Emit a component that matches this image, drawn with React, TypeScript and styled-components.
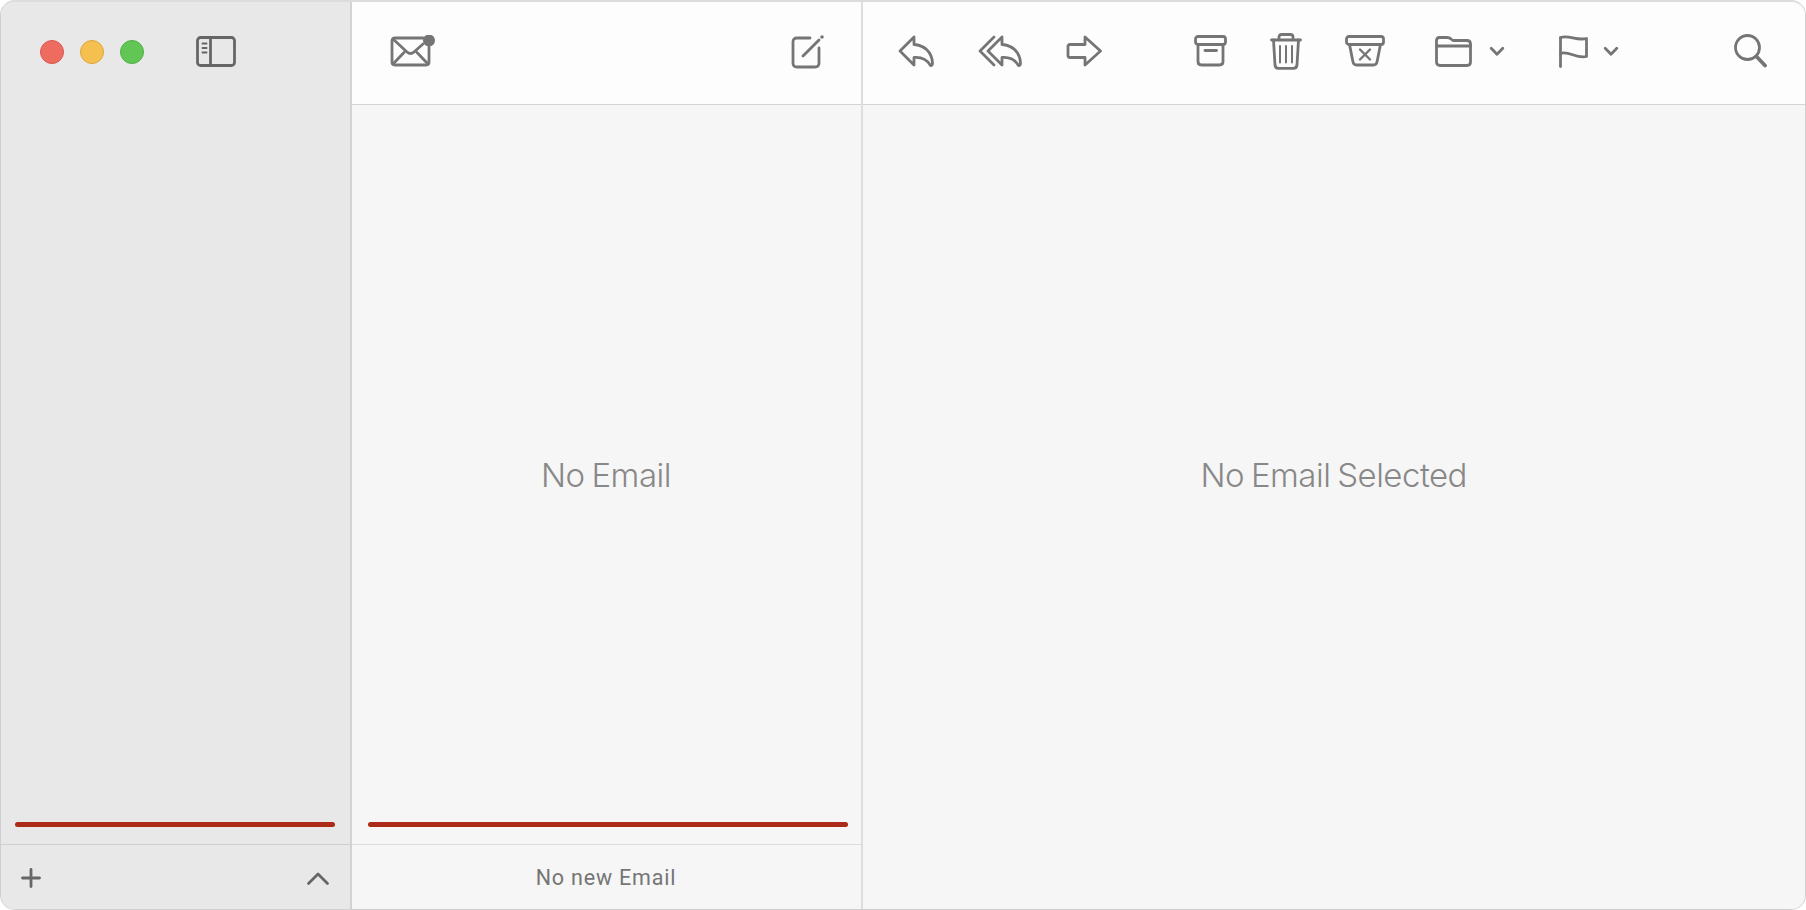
import styled, { createGlobalStyle } from "styled-components";

const GlobalStyle = createGlobalStyle`
  html, body {
    margin: 0;
    padding: 0;
    height: 100%;
    background: #fff;
  }
  #root {
    height: 100%;
  }
`;

const MailWindow = styled.div`
  box-sizing: border-box;
  width: 1806px;
  height: 910px;
  display: grid;
  grid-template-columns: 350.5px 511px 1fr;
  border: 1.5px solid #cfcfcf;
  border-top: 2px solid #dcdcdc;
  border-radius: 15px;
  overflow: hidden;
  background: #f6f6f6;
`;

const Column = styled.section<{ $bg: string; $line?: string }>`
  display: flex;
  flex-direction: column;
  min-width: 0;
  background: ${(p) => p.$bg};
  border-right: ${(p) => (p.$line ? `2px solid ${p.$line}` : "none")};
`;

const Toolbar = styled.header<{ $bg?: string; $line?: string }>`
  box-sizing: border-box;
  height: 102.5px;
  flex: none;
  display: flex;
  align-items: center;
  padding-bottom: 3.5px;
  color: #757575;
  background: ${(p) => p.$bg || "#fdfdfd"};
  border-bottom: ${(p) => (p.$line ? `1.5px solid ${p.$line}` : "none")};
`;

const SidebarBar = styled(Toolbar)`
  padding-left: 39px;
  color: #666;
`;

const ListBar = styled(Toolbar)`
  justify-content: space-between;
  padding-left: 38px;
  padding-right: 36px;
`;

const MainBar = styled(Toolbar)`
  padding-left: 35px;
  padding-right: 38px;
`;

const Lights = styled.div`
  display: flex;
  gap: 16px;
  margin-right: 52px;
`;

const Light = styled.span<{ $color: string; $edge: string }>`
  box-sizing: border-box;
  width: 24px;
  height: 24px;
  border-radius: 50%;
  background: ${(p) => p.$color};
  border: 1px solid ${(p) => p.$edge};
`;

const ToolGroup = styled.div<{ $gap: number; $offset?: number }>`
  display: flex;
  align-items: center;
  gap: ${(p) => p.$gap}px;
  margin-left: ${(p) => p.$offset || 0}px;
`;

const SearchSlot = styled.div`
  display: flex;
  margin-left: auto;
`;

const Icon = styled.svg`
  display: block;
  flex: none;
  fill: none;
  stroke: currentColor;
  stroke-width: 2.8;
  stroke-linecap: round;
  stroke-linejoin: round;
`;

const Body = styled.div`
  flex: 1;
  display: flex;
  flex-direction: column;
  min-height: 0;
`;

const Empty = styled.div`
  flex: 1;
  display: flex;
  align-items: center;
  justify-content: center;
  font-family: Inter, "Liberation Sans", sans-serif;
  font-size: 33px;
  font-weight: 300;
  letter-spacing: -0.5px;
  word-spacing: -2px;
  color: #888888;
`;

const ListEmpty = styled(Empty)`
  padding-top: 24px;
`;

const MainEmpty = styled(Empty)`
  padding-bottom: 64px;
`;

const ProgressBar = styled.div<{ $inset: string }>`
  height: 5px;
  flex: none;
  margin: ${(p) => p.$inset};
  border-radius: 3px;
  background: #ab2a18;
`;

const Footer = styled.footer<{ $line: string }>`
  box-sizing: border-box;
  height: 65px;
  flex: none;
  display: flex;
  align-items: center;
  border-top: 1.5px solid ${(p) => p.$line};
`;

const SidebarFooter = styled(Footer)`
  justify-content: space-between;
  padding: 2px 20px 0 19px;
  color: #666;
`;

const ListFooter = styled(Footer)`
  justify-content: center;
  padding-top: 1px;
  font-family: Roboto, "Liberation Sans", sans-serif;
  font-size: 21.5px;
  letter-spacing: 0.8px;
  color: #757575;
`;

const SidebarToggle = () => (
  <Icon width="40" height="31" viewBox="0 0 40 31">
    <rect x="1.5" y="1.5" width="37" height="28" rx="3" />
    <path d="M14.5 1.5V29.5" />
    <path d="M6.5 7.5H10.5M6.5 12H10.5M6.5 16.5H10.5" strokeWidth="2" />
  </Icon>
);

const MailIcon = () => (
  <Icon width="46" height="33" viewBox="0 0 46 33">
    <path d="M33 3H5Q2 3 2 6V27Q2 30 5 30H36Q39 30 39 27V12" />
    <path d="M3 4L17 17Q20.5 20 24 17L33 9M3 29L14 17.5M38 29L27 17.5" />
    <circle cx="39" cy="5.5" r="6" fill="currentColor" stroke="none" />
  </Icon>
);

const ComposeIcon = () => (
  <Icon width="34" height="35" viewBox="0 0 34 35">
    <path d="M19 4H6Q2 4 2 8V29Q2 33 6 33H24Q28 33 28 29V14" />
    <path d="M12 22L28 6" />
    <circle cx="31" cy="3" r="1.8" fill="currentColor" stroke="none" />
  </Icon>
);

const ReplyIcon = () => (
  <Icon width="36" height="32" viewBox="0 0 36 32">
    <path d="M16 2L2 16L16 30V22.5C23 22 29 24.5 32.5 30.5C34 30.5 34.5 29.5 34.5 28C34 17 26 10 16 9.5Z" />
  </Icon>
);

const ReplyAllIcon = () => (
  <Icon width="44" height="32" viewBox="0 0 44 32">
    <path d="M16 2L2 16L16 30" />
    <path d="M24 2L10 16L24 30V22.5C31 22 37 24.5 40.5 30.5C42 30.5 42.5 29.5 42.5 28C42 17 34 10 24 9.5Z" />
  </Icon>
);

const ForwardIcon = () => (
  <Icon width="36" height="32" viewBox="0 0 36 32">
    <path d="M19 2V9.5H4Q2 9.5 2 11.5V20.5Q2 22.5 4 22.5H19V30L34.5 16Z" />
  </Icon>
);

const ArchiveIcon = () => (
  <Icon width="33" height="32" viewBox="0 0 33 32">
    <rect x="1.5" y="1.5" width="30" height="8" rx="2.5" />
    <path d="M4 9.5V26.5Q4 30 7.5 30H25.5Q29 30 29 26.5V9.5" />
    <path d="M11 15.5H22.5" />
  </Icon>
);

const TrashIcon = () => (
  <Icon width="32" height="37" viewBox="0 0 32 37">
    <path d="M1.5 7H30.5" />
    <path d="M9 6.5V4Q9 1.5 11.5 1.5H20.5Q23 1.5 23 4V6.5" />
    <path d="M3.5 7L5 32Q5.3 35.3 8.5 35.3H23.5Q26.7 35.3 27 32L28.5 7" />
    <path d="M10 13V29.5M16 13V29.5M22 13V29.5" strokeWidth="2" />
  </Icon>
);

const DeleteIcon = () => (
  <Icon width="40" height="32" viewBox="0 0 40 32">
    <rect x="1.5" y="1.5" width="37" height="8" rx="2.5" />
    <path d="M4.5 9.5L8 27Q8.6 30 11.5 30H28.5Q31.4 30 32 27L35.5 9.5" />
    <path d="M15 14.5L25 24.5M25 14.5L15 24.5" strokeWidth="2.4" />
  </Icon>
);

const FolderIcon = () => (
  <Icon width="37" height="31" viewBox="0 0 37 31">
    <path d="M1.5 26V4.5Q1.5 1.5 4.5 1.5H12Q14.5 1.5 16 3L18 4.5H32Q35.5 4.5 35.5 8V26Q35.5 29.5 32 29.5H5Q1.5 29.5 1.5 26Z" />
    <path d="M1.5 10H35.5" />
  </Icon>
);

const FlagIcon = () => (
  <Icon width="29" height="33" viewBox="0 0 29 33">
    <path d="M1.5 31.5V3" />
    <path d="M1.5 2.5C10 -0.5 17 6 27.5 3.5V21.5C17 24 10 15.5 1.5 18.5" />
  </Icon>
);

const SearchIcon = () => (
  <Icon width="33" height="34" viewBox="0 0 33 34">
    <circle cx="13.5" cy="13.5" r="12" />
    <path d="M22.5 22.5L31 31.5" strokeWidth="3.8" />
  </Icon>
);

const MenuChevron = () => (
  <Icon width="16" height="11" viewBox="0 0 16 11" strokeWidth="3.6">
    <path d="M2.2 2.2L8 8.2L13.8 2.2" />
  </Icon>
);

const PlusIcon = () => (
  <Icon width="22" height="22" viewBox="0 0 22 22" strokeWidth="4">
    <path d="M11 2.5V19.5M2.5 11H19.5" />
  </Icon>
);

const UpChevron = () => (
  <Icon width="24" height="15" viewBox="0 0 24 15" strokeWidth="4">
    <path d="M2.5 12.5L12 3L21.5 12.5" />
  </Icon>
);

export default function App() {
  return (
    <>
      <GlobalStyle />
      <MailWindow>
        <Column $bg="#e8e8e8" $line="#d2d2d2">
          <SidebarBar $bg="#e8e8e8">
            <Lights>
              <Light $color="#ee6b60" $edge="#d9594f" />
              <Light $color="#f5c04f" $edge="#dca53c" />
              <Light $color="#61c654" $edge="#4fb043" />
            </Lights>
            <SidebarToggle />
          </SidebarBar>
          <Body>
            <Empty />
            <ProgressBar $inset="0 15px 17px 14px" />
          </Body>
          <SidebarFooter $line="#cfcfcf">
            <PlusIcon />
            <UpChevron />
          </SidebarFooter>
        </Column>

        <Column $bg="#f6f6f6" $line="#dddddd">
          <ListBar $line="#d4d4d4">
            <MailIcon />
            <ComposeIcon />
          </ListBar>
          <Body>
            <ListEmpty>No Email</ListEmpty>
            <ProgressBar $inset="0 13px 17px 16px" />
          </Body>
          <ListFooter $line="#dddddd">No new Email</ListFooter>
        </Column>

        <Column $bg="#f6f6f6">
          <MainBar $line="#d4d4d4">
            <ToolGroup $gap={44}>
              <ReplyIcon />
              <ReplyAllIcon />
              <ForwardIcon />
            </ToolGroup>
            <ToolGroup $gap={43} $offset={92}>
              <ArchiveIcon />
              <TrashIcon />
              <DeleteIcon />
            </ToolGroup>
            <ToolGroup $gap={17} $offset={50}>
              <FolderIcon />
              <MenuChevron />
            </ToolGroup>
            <ToolGroup $gap={15} $offset={54}>
              <FlagIcon />
              <MenuChevron />
            </ToolGroup>
            <SearchSlot>
              <SearchIcon />
            </SearchSlot>
          </MainBar>
          <Body>
            <MainEmpty>No Email Selected</MainEmpty>
          </Body>
        </Column>
      </MailWindow>
    </>
  );
}
